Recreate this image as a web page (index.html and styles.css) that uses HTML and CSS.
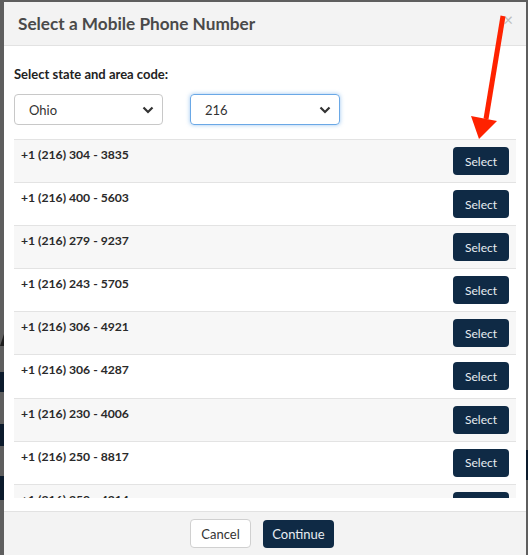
FILE: index.html
```html
<!DOCTYPE html>
<html lang="en">
<head>
    <meta charset="UTF-8">
    <meta name="viewport" content="width=device-width, initial-scale=1.0">
    <title>Select a Mobile Phone Number</title>
    <link rel="stylesheet" href="styles.css">
</head>
<body>
    <div class="page-bit bit-a"></div>
    <div class="page-bit bit-navy bit-1"></div>
    <div class="page-bit bit-navy bit-2"></div>
    <div class="page-bit bit-navy bit-3"></div>
    <div class="page-bit bit-navy bit-4"></div>

    <div class="modal">
        <div class="modal-header">
            <h1>Select a Mobile Phone Number</h1>
            <span class="close-btn">&times;</span>
        </div>
        <div class="modal-body">
            <p class="field-label">Select state and area code:</p>
            <div class="selects">
                <div class="select-box state">
                    <span>Ohio</span>
                    <svg width="12" height="8" viewBox="0 0 12 8"><path d="M1.5 1.5 L6 6 L10.5 1.5" fill="none" stroke="#333" stroke-width="2.2"/></svg>
                </div>
                <div class="select-box area focused">
                    <span>216</span>
                    <svg width="12" height="8" viewBox="0 0 12 8"><path d="M1.5 1.5 L6 6 L10.5 1.5" fill="none" stroke="#333" stroke-width="2.2"/></svg>
                </div>
            </div>
            <div class="number-list">
                <div class="row"><span class="phone">+1 (216) 304 - 3835</span><button class="btn-select">Select</button></div>
                <div class="row"><span class="phone">+1 (216) 400 - 5603</span><button class="btn-select">Select</button></div>
                <div class="row"><span class="phone">+1 (216) 279 - 9237</span><button class="btn-select">Select</button></div>
                <div class="row"><span class="phone">+1 (216) 243 - 5705</span><button class="btn-select">Select</button></div>
                <div class="row"><span class="phone">+1 (216) 306 - 4921</span><button class="btn-select">Select</button></div>
                <div class="row"><span class="phone">+1 (216) 306 - 4287</span><button class="btn-select">Select</button></div>
                <div class="row"><span class="phone">+1 (216) 230 - 4006</span><button class="btn-select">Select</button></div>
                <div class="row"><span class="phone">+1 (216) 250 - 8817</span><button class="btn-select">Select</button></div>
                <div class="row"><span class="phone">+1 (216) 250 - 4214</span><button class="btn-select">Select</button></div>
            </div>
        </div>
        <div class="modal-footer">
            <button class="btn-cancel">Cancel</button>
            <button class="btn-continue">Continue</button>
        </div>
    </div>

    <svg class="arrow" width="528" height="555" viewBox="0 0 528 555">
        <line x1="503" y1="16" x2="486" y2="119" stroke="#ff2200" stroke-width="5"/>
        <polygon points="471,116 497,121 479,139" fill="#ff2200"/>
    </svg>
</body>
</html>
```

FILE: styles.css
```css
body {
    margin: 0;
    width: 528px;
    height: 555px;
    overflow: hidden;
    position: relative;
    background-color: #5e5e5e;
    font-family: Lato, "Open Sans", sans-serif;
    color: #333;
}
/* bits of the page behind the overlay */
.page-bit {
    position: absolute;
}
.bit-a {
    left: 0;
    top: 334px;
    width: 0;
    height: 0;
    border-left: 4px solid transparent;
    border-bottom: 12px solid #1e1e1e;
}
.bit-navy {
    background-color: #0c1b2c;
    width: 4px;
}
.bit-1 { left: 0; top: 372px; height: 20px; }
.bit-2 { left: 0; top: 424px; height: 22px; }
.bit-3 { left: 0; top: 476px; height: 24px; }
.bit-4 { left: 526px; top: 450px; height: 30px; width: 2px; }

.modal {
    position: relative;
    margin: 2px 2px 0 4px;
    width: 522px;
    height: 553px;
    background-color: white;
    display: flex;
    flex-direction: column;
}
.modal-header {
    height: 43px;
    background-color: #f3f3f3;
    border-bottom: 1px solid #e2e2e2;
    padding: 0 14px;
    display: flex;
    align-items: center;
    position: relative;
}
.modal-header h1 {
    margin: 0;
    font-size: 17.2px;
    font-weight: bold;
    color: #4a4a4a;
}
.close-btn {
    position: absolute;
    top: 7px;
    right: 13px;
    font-size: 17px;
    color: #bdbdbd;
}
.modal-body {
    padding: 20px 10px 13px;
}
.field-label {
    margin: 0 0 12px;
    font-size: 13px;
    font-weight: bold;
    line-height: 16px;
    color: #222;
}
.selects {
    display: flex;
    gap: 27px;
    margin-bottom: 14px;
}
.select-box {
    box-sizing: border-box;
    width: 149px;
    height: 31px;
    border: 1px solid #c8c8c8;
    border-radius: 4px;
    display: flex;
    align-items: center;
    justify-content: space-between;
    padding: 0 8px 0 14px;
    font-size: 13px;
    color: #333;
}
.select-box.area {
    width: 150px;
}
.select-box.focused {
    border-color: #6aa8e6;
    box-shadow: 0 0 4px rgba(90, 160, 230, 0.6);
}
.number-list {
    height: 359px;
    overflow: hidden;
}
.row {
    box-sizing: border-box;
    height: 43.1px;
    border-top: 1px solid #e3e3e3;
    display: flex;
    justify-content: space-between;
    align-items: flex-start;
    padding: 7px 7px 0;
}
.row:nth-child(odd) {
    background-color: #f7f7f7;
}
.phone {
    font-size: 12.2px;
    font-weight: bold;
    line-height: 16px;
    color: #2a2a2a;
}
.btn-select {
    width: 56px;
    height: 28px;
    border: none;
    border-radius: 4px;
    background-color: #0f2a45;
    color: #e8edf2;
    font-family: inherit;
    font-size: 12px;
}
.modal-footer {
    flex: 1;
    background-color: #f3f3f3;
    border-top: 1px solid #e2e2e2;
    display: flex;
    justify-content: center;
    align-items: flex-start;
    gap: 12px;
    padding: 7px 6px 0 0;
}
.btn-cancel {
    width: 61px;
    height: 29px;
    border: 1px solid #d0d0d0;
    border-radius: 4px;
    background-color: white;
    color: #333;
    font-family: inherit;
    font-size: 13px;
}
.btn-continue {
    width: 71px;
    height: 28px;
    margin-top: 1px;
    border: none;
    border-radius: 4px;
    background-color: #0f2a45;
    color: #e8edf2;
    font-family: inherit;
    font-size: 13px;
}
.arrow {
    position: absolute;
    top: 0;
    left: 0;
}
```
